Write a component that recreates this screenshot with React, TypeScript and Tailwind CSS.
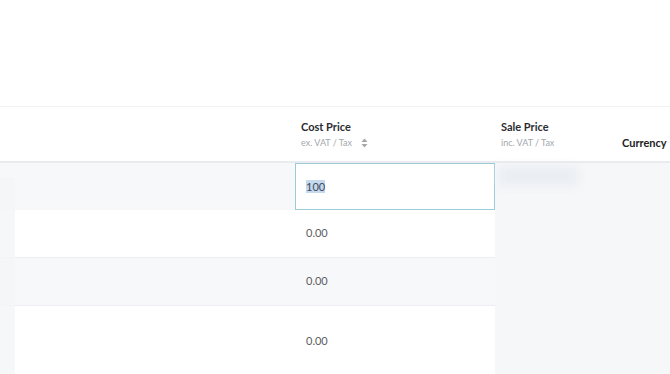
import React from 'react';

const rows = [
  { value: '100', editing: true, shaded: true, h: 'h-[47px]' },
  { value: '0.00', editing: false, shaded: false, h: 'h-[48px]' },
  { value: '0.00', editing: false, shaded: true, h: 'h-[48px]' },
  { value: '0.00', editing: false, shaded: false, h: 'h-[70px]' },
];

const SortIcon = () => (
  <svg width="7" height="10" viewBox="0 0 7 10" className="ml-[9px]">
    <path d="M3.5 0.5 L6.5 4 H0.5 Z" fill="#a3a7ab" />
    <path d="M3.5 9.5 L6.5 6 H0.5 Z" fill="#a3a7ab" />
  </svg>
);

export default function App() {
  return (
    <div className="w-[670px] h-[374px] overflow-hidden bg-white font-['Lato','Liberation_Sans',sans-serif] text-[#2a2d31]">
      {/* empty top area */}
      <div className="h-[107px] border-b border-[#f1f2f4]" />

      {/* header */}
      <div className="flex h-[56px] border-b-2 border-[#e9ebee]">
        <div className="w-[295px]" />
        <div className="w-[200px] pl-[6px] pt-[13px]">
          <div className="text-[11px] font-bold leading-[14px]">Cost Price</div>
          <div className="flex items-center mt-[3px] text-[9px] leading-[12px] text-[#a3a7ab]">
            ex. VAT / Tax
            <SortIcon />
          </div>
        </div>
        <div className="w-[127px] pl-[6px] pt-[13px]">
          <div className="text-[11px] font-bold leading-[14px]">Sale Price</div>
          <div className="mt-[3px] text-[9px] leading-[12px] text-[#a3a7ab]">inc. VAT / Tax</div>
        </div>
        <div className="flex-1 pt-[29px] text-[11px] font-bold leading-[14px] text-[#222]">Currency</div>
      </div>

      {/* body */}
      <div className="flex">
        <div className="relative w-[495px]">
          {rows.map((r, i) => (
            <div
              key={i}
              className={`flex ${r.h} ${r.shaded ? 'bg-[#f7f8fa]' : 'bg-white'} ${i > 0 && i < 3 ? 'border-b border-[#eceef1]' : ''}`}
            >
              <div className="w-[295px]" />
              {r.editing ? (
                <div className="w-[200px] bg-white border border-[#9ccad8] flex items-center pl-[10px]">
                  <span className="bg-[#c6d8ee] text-[11px] leading-[13px] text-[#3c4a5a]">{r.value}</span>
                </div>
              ) : (
                <div className="w-[200px] flex items-center pl-[11px] text-[11px] text-[#5a5d61]">
                  {r.value}
                </div>
              )}
            </div>
          ))}
          <div className="absolute left-0 top-[14px] bottom-0 w-[15px] bg-[#f4f5f7]/80" />
        </div>
        <div className="relative flex-1 bg-[#f6f7f9]">
          <div className="absolute left-[3px] top-[3px] w-[80px] h-[20px] bg-[#eaeef3] blur-[5px]" />
        </div>
      </div>
    </div>
  );
}
